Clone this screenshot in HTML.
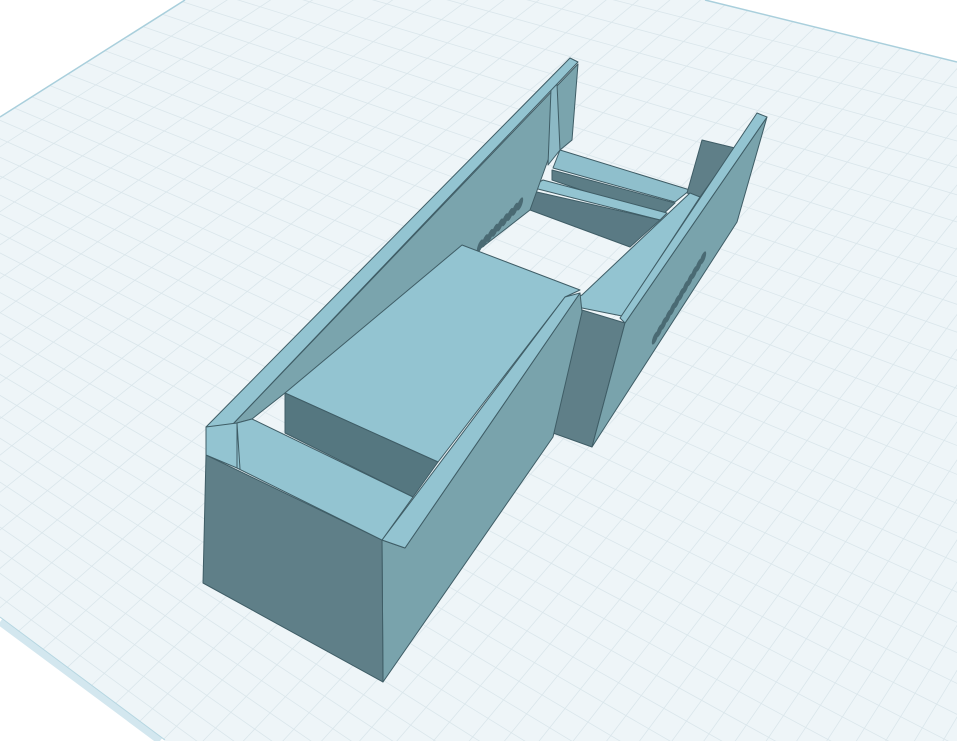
<!DOCTYPE html>
<html><head><meta charset="utf-8"><style>
html,body{margin:0;padding:0;background:#fff;width:957px;height:741px;overflow:hidden;}
svg{display:block;}
</style></head><body>
<svg id="s" width="957" height="741" viewBox="0 0 957 741" xmlns="http://www.w3.org/2000/svg">
<defs><clipPath id="pc"><polygon points="185,0 705,0 957,62 957,741 165,741 0,618 0,117"/></clipPath></defs>
<rect width="957" height="741" fill="#ffffff"/>
<polygon points="185,0 705,0 957,62 957,741 165,741 0,618 0,117" fill="#eef5f8"/>
<g id="grid" clip-path="url(#pc)" stroke="#dae6eb" stroke-width="0.8" fill="none"></g>
<line x1="0" y1="622" x2="160" y2="741" stroke="#d3e7ef" stroke-width="7"/>
<line x1="0" y1="617" x2="165" y2="740" stroke="#b5d6e1" stroke-width="1"/>
<line x1="0" y1="117" x2="185" y2="0" stroke="#a9cfdc" stroke-width="1.5"/>
<line x1="705" y1="0" x2="957" y2="62" stroke="#a9cfdc" stroke-width="1.5"/>

<g stroke="#3f5d66" stroke-width="1" stroke-linejoin="round">
<polygon points="560,150 690,190 675,202 553,168" fill="#8fbfcc"/>
<polygon points="552,170 675,203 660,217 552,180" fill="#5c7d86"/>
<polygon points="530,187 543,180 667,213 660,220" fill="#93c4d1"/>
<polygon points="528,190 660,220 630,247 530,210" fill="#5a7a84"/>
<polygon points="702,140 735,148 700,197 687,193" fill="#5f7f88"/>
<polygon points="232,425 578,64 572,140 548,160 530,210 485,245 285,393 252,419 237,423" fill="#7aa4ad"/>
<polygon points="551,89 557,84 560,150 548,165" fill="#8cb9c5"/>
<g id="slotsL" fill="#4a6a73" stroke="none"></g>
<polygon points="206,427 570,58 578,62 232,425" fill="#93c4d1"/>
<polygon points="567,302 582,295 690,193 700,197 622,316 567,305" fill="#93c4d1"/>
<polygon points="582,310 625,323 592,447 553,433" fill="#5f7f88"/>
<polygon points="625,323 767,117 737,222 592,447" fill="#79a3ac"/>
<polygon points="620,318 757,113 767,117 625,323" fill="#93c4d1"/>
<g id="slotsR" fill="#4a6a73" stroke="none"></g>
<polygon points="382,540 405,548 580,293 582,312 553,437 383,682" fill="#79a3ac"/>
<polygon points="206,455 382,540 383,682 203,583" fill="#5f7f88"/>
<polygon points="206,427 237,423 237,468 206,455" fill="#93c4d1"/>
<polygon points="285,393 462,245 580,290 565,297 438,462" fill="#93c4d1"/>
<polygon points="285,393 285,433 413,497 438,462" fill="#557780"/>
<polygon points="382,540 565,297 580,293 405,548" fill="#93c4d1"/>
<polygon points="237,423 252,419 413,497 382,540 237,468" fill="#93c4d1"/>
<line x1="237" y1="423" x2="240" y2="469" />
</g>
</svg>
<script>
(function(){
var NS="http://www.w3.org/2000/svg";
var g=document.getElementById('grid');
function ray(vx,vy,a){var r=a*Math.PI/180;var L=6000;
 var l=document.createElementNS(NS,'line');
 l.setAttribute('x1',vx);l.setAttribute('y1',vy);
 l.setAttribute('x2',vx+L*Math.cos(r));l.setAttribute('y2',vy+L*Math.sin(r));g.appendChild(l);}
for(var a=13.8;a<=37;a+=0.56){ray(-1585,-563,a);}
for(var b=100;b<=148;b+=0.62){ray(2085,-1201,b);}
function slots(id,x1,y1,x2,y2,n){var e=document.getElementById(id);
 for(var i=0;i<n;i++){var t=i/(n-1);var x=x1+(x2-x1)*t,y=y1+(y2-y1)*t;
  var el=document.createElementNS(NS,'ellipse');el.setAttribute('cx',x);el.setAttribute('cy',y);
  el.setAttribute('rx',2.2);el.setAttribute('ry',7);el.setAttribute('transform','rotate(20 '+x+' '+y+')');e.appendChild(el);}}
slots('slotsL',480,246,520,204,9);
slots('slotsR',655,338,703,258,12);
})();
</script>
</body></html>
